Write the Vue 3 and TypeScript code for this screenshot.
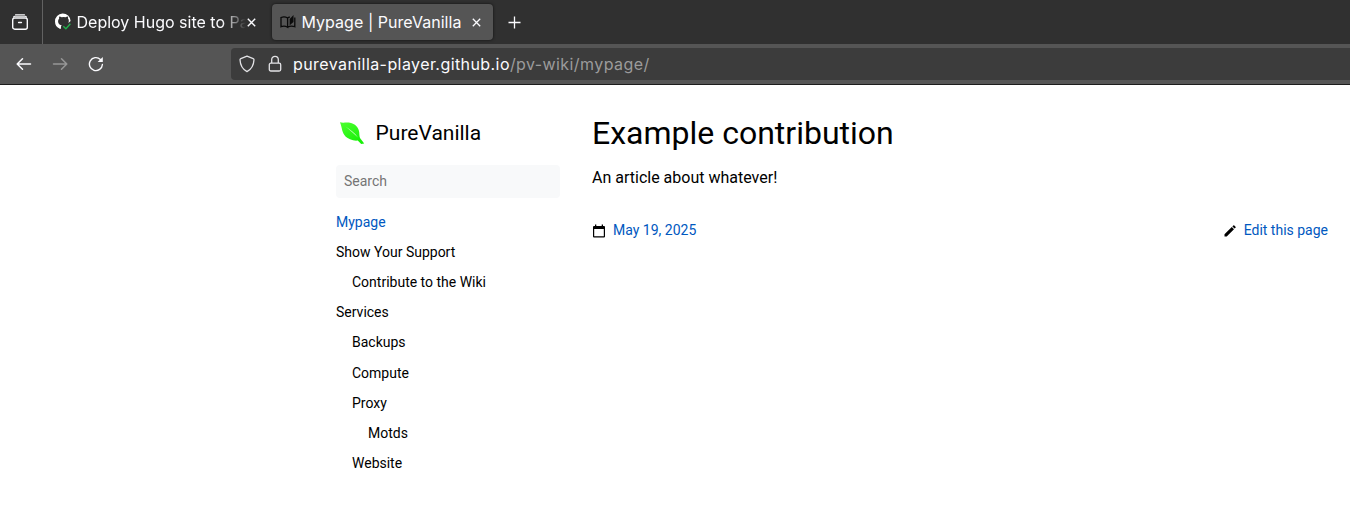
<script setup lang="ts">
interface NavItem {
  label: string
  level: number
  active?: boolean
}

const nav: NavItem[] = [
  { label: 'Mypage', level: 0, active: true },
  { label: 'Show Your Support', level: 0 },
  { label: 'Contribute to the Wiki', level: 1 },
  { label: 'Services', level: 0 },
  { label: 'Backups', level: 1 },
  { label: 'Compute', level: 1 },
  { label: 'Proxy', level: 1 },
  { label: 'Motds', level: 2 },
  { label: 'Website', level: 1 },
]
</script>

<template>
  <div class="window">
    <header class="chrome">
      <div class="tabs">
        <div class="recent">
          <svg width="18" height="18" viewBox="0 0 18 18" fill="none" stroke="#fbfbfe" stroke-width="1.4" stroke-linecap="round">
            <path d="M4.500 1.700h9M2.500 4.200q.3-1 1.500-1h10q1.200 0 1.500 1" stroke-width="1.1" />
            <rect x="1.700" y="5" width="14.600" height="11.200" rx="2" />
            <path d="M7.600 9.500h2.800" />
          </svg>
        </div>
        <div class="tab idle">
          <svg class="favicon" width="18" height="18" viewBox="0 0 18 18">
            <path d="M6 15.500v-2.300c-1.800.4-2.300-.7-2.800-1.500" fill="none" stroke="#fff" />
            <path d="M6 15.700C2.600 14.700 1 11.800 1 8.500a7.800 7.800 0 0 1 15.600-.6l-2.200 2c.8-2.300.4-3.600-.4-4.500.2-.8.1-1.500-.1-2-1 .1-1.700.5-2.300.9a9 9 0 0 0-4 0c-.7-.5-1.500-.9-2.300-.9-.3.7-.3 1.400-.1 2-2.200 2.400-.9 6.600 2.500 6.800-.8.9-.8 1.500-.8 3.500Z" fill="#fff" />
            <path d="m9.300 13.200 2.600 2.500 4.500-4.900" fill="none" stroke="#22b14c" stroke-width="1.400" />
          </svg>
          <span class="title faded">Deploy Hugo site to Pa</span>
          <svg class="close" width="9" height="9" viewBox="0 0 9 9" stroke="#fbfbfe" stroke-width="1.400"><path d="m.8.8 7.400 7.400M8.200.8.8 8.200" /></svg>
        </div>
        <div class="tab current">
          <svg class="favicon" width="16" height="16" viewBox="0 0 16 16">
            <path d="M1 3.500q3.500-1.600 6.600.5v9.200q-3.100-2-6.600-.5ZM7.600 4q1-.7 2.200-1M14.800 3.500v9.200q-4-1.500-7.200.5" fill="none" stroke="#0a0a0a" stroke-width="1.300" />
            <path d="M9.700 4.900 13.500 1v6.900l-3.800 3.300Z" fill="#0a0a0a" />
          </svg>
          <span class="title">Mypage | PureVanilla</span>
          <svg class="close" width="9" height="9" viewBox="0 0 9 9" stroke="#fbfbfe" stroke-width="1.300"><path d="m.8.8 7.400 7.400M8.200.8.8 8.200" /></svg>
        </div>
        <svg class="plus" width="13" height="13" viewBox="0 0 13 13" stroke="#fbfbfe" stroke-width="1.300"><path d="M6.500.5v12M.5 6.500h12" /></svg>
      </div>

      <div class="toolbar">
        <svg class="back" width="16" height="14" viewBox="0 0 16 14" fill="none" stroke="#fbfbfe" stroke-width="1.500" stroke-linecap="round" stroke-linejoin="round"><path d="M6.500 1.700 1.200 7l5.300 5.300M1.500 7H14.500" /></svg>
        <svg class="forward" width="16" height="14" viewBox="0 0 16 14" fill="none" stroke="#979797" stroke-width="1.500" stroke-linecap="round" stroke-linejoin="round"><path d="M9.500 1.700 14.800 7l-5.300 5.300M14.500 7H1.500" /></svg>
        <svg class="reload" width="16" height="16" viewBox="0 0 16 16" fill="none" stroke="#fbfbfe" stroke-width="1.400">
          <path d="M14.400 8.500A6.500 6.500 0 1 1 12.400 3.400" stroke-linecap="round" />
          <path d="M14.800.9v5.200H9.600Z" fill="#fbfbfe" stroke="none" />
        </svg>
        <div class="address">
          <svg class="shield" width="16" height="18" viewBox="0 0 16 18" fill="none" stroke="#e2e2e5" stroke-width="1.300" stroke-linejoin="round"><path d="M8 1.200 14.200 3.600q.8.300.8 1.200C14.700 10.500 12.500 14.300 8 16.600 3.500 14.300 1.300 10.500 1 4.800q0-.9.800-1.200Z" /></svg>
          <svg class="lock" width="14" height="18" viewBox="0 0 14 18" fill="none" stroke="#e2e2e5" stroke-width="1.300"><rect x="1.300" y="8.200" width="11.400" height="7.800" rx="1.500" /><path d="M3.700 8V4.600a3.300 3.300 0 0 1 6.600 0V8" /></svg>
          <span class="url">purevanilla-player.github.io<span class="path">/pv-wiki/mypage/</span></span>
        </div>
      </div>
    </header>

    <div class="page">
      <aside>
        <a class="brand">
          <svg width="32" height="32" viewBox="0 0 32 32">
            <defs>
              <linearGradient id="leaf" x1="0" y1="0" x2="0.6" y2="1">
                <stop offset="0" stop-color="#4dff30" />
                <stop offset="1" stop-color="#18f008" />
              </linearGradient>
            </defs>
            <path d="M4 5.200C7 6.300 10.500 5 14 5.700c5 .9 8.600 4.600 9.200 9.300.2 2 .1 4 .8 6l4.200 5.600-3 .5-3.500-3.500c-2.600.3-5.200-.2-7.700-1.300C10.500 20.900 8.500 18.800 7.300 16.300 5.800 13 5.500 8.500 4 5.200Z" fill="url(#leaf)" />
            <path d="M9.500 9.600c5 3.100 9.300 6.400 12.500 10.900C18 16.900 14 13.500 9.500 9.600Z" fill="#d9ffd0" />
          </svg>
          <span>PureVanilla</span>
        </a>
        <input class="search" type="text" placeholder="Search" />
        <ul>
          <li v-for="item in nav" :key="item.label" :class="['level-' + item.level, { active: item.active }]">{{ item.label }}</li>
        </ul>
      </aside>
      <main>
        <h1>Example contribution</h1>
        <p>An article about whatever!</p>
        <footer>
          <a>
            <svg width="14" height="14" viewBox="0 0 14 14"><path d="M3 .5h1.300V2h5.400V.5H11V2h1q1 0 1 1v9.500q0 1-1 1H2q-1 0-1-1V3q0-1 1-1h1ZM2.200 5v7.300h9.600V5Z" fill="#000" fill-rule="evenodd" /></svg>
            <span>May 19, 2025</span>
          </a>
          <a>
            <svg width="14" height="14" viewBox="0 0 14 14"><path d="M1.500 10.200 8.800 3l2.200 2.200-7.300 7.300H1.500ZM9.400 2.400l.9-.9q.5-.5 1 0l1.200 1.200q.5.500 0 1l-.9.900Z" fill="#000" /></svg>
            <span>Edit this page</span>
          </a>
        </footer>
      </main>
    </div>
  </div>
</template>

<style>
body {
  background: #fff;
}
</style>

<style scoped>
* {
  box-sizing: border-box;
}
svg {
  display: block;
  flex: none;
}
.window {
  width: 1350px;
  height: 515px;
  overflow: hidden;
  font-family: Roboto, sans-serif;
  color: #000;
}
.chrome {
  height: 85px;
  border-bottom: 1px solid #1c1c1c;
  background: #555;
  font-family: Inter, sans-serif;
  font-size: 16px;
  color: #fbfbfe;
}
.tabs {
  height: 44px;
  display: flex;
  align-items: center;
  background: #303030;
}
.recent {
  width: 43px;
  height: 44px;
  padding: 13px 0 0 11px;
  border-right: 1px solid #626262;
}
.tab {
  display: flex;
  align-items: center;
  height: 36px;
  border-radius: 4px;
}
.idle {
  width: 225px;
  margin-right: 4px;
  padding-left: 11px;
}
.current {
  width: 221px;
  padding-left: 8px;
  background: #555;
  box-shadow: 0 0 3px rgba(0, 0, 0, 0.7);
}
.title {
  white-space: nowrap;
  line-height: 24px;
  width: 163px;
  margin-left: 5.5px;
  letter-spacing: 0.04px;
}
.idle .title {
  width: 169px;
  margin-left: 4.5px;
  letter-spacing: 0;
}
.faded {
  mask-image: linear-gradient(to right, #000 145px, transparent 169px);
}
.close {
  margin-left: 7.5px;
}
.idle .close {
  margin-left: 1.5px;
}
.plus {
  margin-left: 15px;
}
.toolbar {
  display: flex;
  align-items: center;
  height: 40px;
}
.back {
  margin-left: 16px;
}
.forward {
  margin-left: 20px;
}
.reload {
  margin-left: 20px;
}
.address {
  flex: 1;
  height: 32px;
  margin-left: 127px;
  padding-left: 8px;
  display: flex;
  align-items: center;
  background: #3c3c3c;
  border-radius: 4px 0 0 4px;
}
.lock {
  margin-left: 13px;
}
.url {
  margin-left: 11px;
  letter-spacing: 0.42px;
  white-space: nowrap;
}
.path {
  color: #9b9b9b;
}
.page {
  display: flex;
  padding-left: 320px;
}
aside {
  width: 256px;
  padding: 32px 16px 0;
  font-size: 14px;
}
.brand {
  display: flex;
  align-items: center;
  gap: 7.6px;
  height: 32px;
  font-size: 21px;
}
.search {
  display: block;
  width: 224px;
  height: 33px;
  margin: 16px 0 9px;
  padding: 0 8px 2px;
  border: 0;
  border-radius: 4px;
  background: #f8f9fa;
  font: 14px Roboto, sans-serif;
}
.search::placeholder {
  color: #757575;
}
ul {
  margin: 0;
  padding: 0;
  list-style: none;
}
li {
  height: 30.11px;
  line-height: 30px;
}
.level-1 {
  padding-left: 16px;
}
.level-2 {
  padding-left: 32px;
}
.active {
  color: #0058c0;
}
main {
  width: 768px;
  padding: 0 16px;
}
h1 {
  margin: 24px 0 0;
  font-size: 32px;
  font-weight: 400;
  line-height: 48px;
}
p {
  margin: 8px 0 0;
  font-size: 16px;
  line-height: 26px;
}
footer {
  display: flex;
  justify-content: space-between;
  margin-top: 28px;
  font-size: 14px;
  line-height: 22px;
  color: #0058c0;
}
footer a {
  display: flex;
  align-items: center;
  gap: 7px;
}
footer svg {
  position: relative;
  top: 1px;
}
</style>
